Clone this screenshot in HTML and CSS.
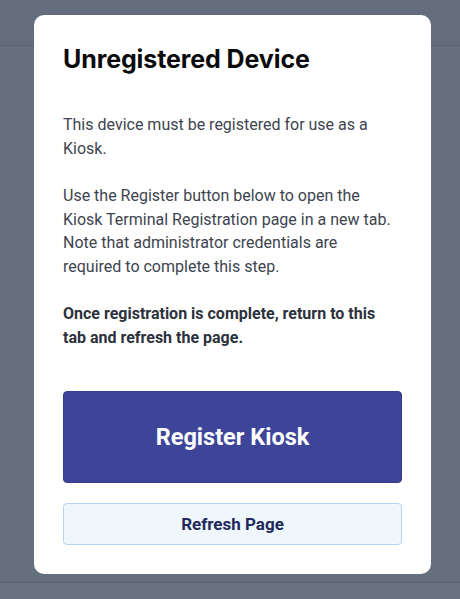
FILE: index.html
```html
<!DOCTYPE html>
<html lang="en">
<head>
<meta charset="utf-8">
<title>Unregistered Device</title>
<link rel="stylesheet" href="styles.css">
</head>
<body>
<div class="page">
  <div class="page-header"></div>
  <div class="page-main"></div>
  <div class="page-footer"></div>
</div>
<div class="overlay">
  <div class="dialog" role="dialog" aria-labelledby="dlg-title">
    <h1 class="dialog-title" id="dlg-title">Unregistered Device</h1>
    <div class="dialog-body">
      <p>This device must be registered for use as a Kiosk.</p>
      <p>Use the Register button below to open the Kiosk Terminal Registration page in a new tab. Note that administrator credentials are required to complete this step.</p>
      <p class="strong">Once registration is complete, return to this tab and refresh the page.</p>
    </div>
    <div class="dialog-actions">
      <button class="btn btn-primary" type="button">Register Kiosk</button>
      <button class="btn btn-secondary" type="button">Refresh Page</button>
    </div>
  </div>
</div>
</body>
</html>
```
FILE: styles.css
```css
* { box-sizing: border-box; }
html, body { margin: 0; padding: 0; height: 100%; }
body {
  background: #646e7c;
  font-family: Roboto, "Noto Sans", sans-serif;
  overflow: hidden;
}
.page {
  display: flex;
  flex-direction: column;
  height: 100%;
}
.page-header {
  height: 46px;
  flex: none;
  border-bottom: 1px solid #5c6573;
  background: #636d7b;
}
.page-main { flex: 1; background: #656f7d; }
.page-footer {
  height: 17px;
  flex: none;
  border-top: 1px solid #5c6573;
  background: #6a7381;
}
.overlay {
  position: fixed;
  inset: 0;
  display: flex;
  align-items: flex-start;
  padding: 15px 0 0 34px;
}
.dialog {
  width: 397px;
  height: 559px;
  background: #ffffff;
  border-radius: 10px;
  padding: 29px 29px 29px 29px;
  display: flex;
  flex-direction: column;
}
.dialog-title {
  margin: 0;
  font-family: Inter, "Open Sans", sans-serif;
  font-weight: 700;
  font-size: 25px;
  line-height: 30px;
  color: #0b0b0d;
  letter-spacing: -0.1px;
}
.dialog-body {
  margin-top: 39px;
  padding-right: 6px;
  display: flex;
  flex-direction: column;
  gap: 24px;
}
.dialog-body p {
  margin: 0;
  font-size: 16px;
  line-height: 23.5px;
  color: #3d4450;
}
.dialog-body p.strong {
  font-weight: 700;
  color: #2c323c;
}
.dialog-actions {
  margin-top: 42px;
  display: flex;
  flex-direction: column;
  gap: 20px;
}
.btn {
  width: 100%;
  font-family: Roboto, "Noto Sans", sans-serif;
  font-weight: 700;
  border-radius: 4px;
  cursor: pointer;
}
.btn-primary {
  height: 92px;
  background: #3d4599;
  border: 1px solid #353d8c;
  color: #ffffff;
  font-size: 23.5px;
}
.btn-secondary {
  height: 42px;
  background: #f0f7fc;
  border: 1px solid #b6d5f3;
  color: #1f2a5c;
  font-size: 17px;
}
```
